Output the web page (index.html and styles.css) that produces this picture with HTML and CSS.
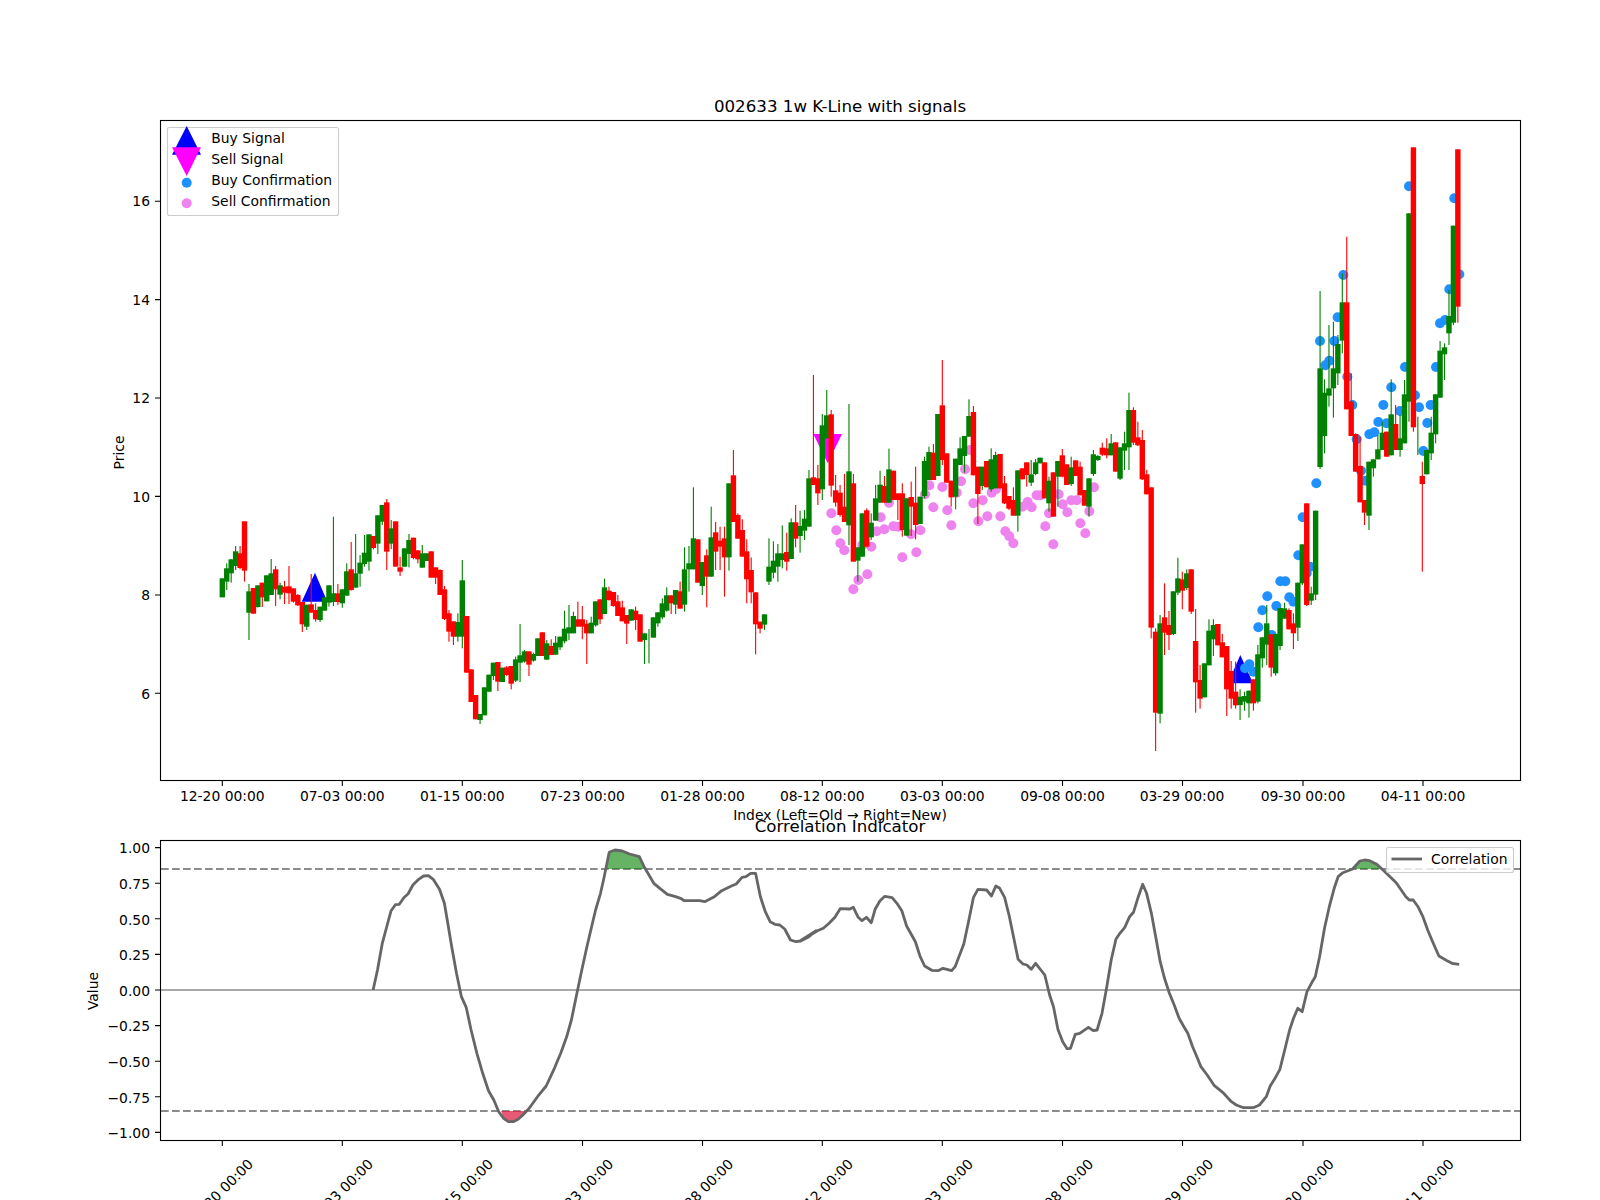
FILE: index.html
```html
<!DOCTYPE html>
<html lang="en">
<head>
<meta charset="utf-8">
<title>002633 1w K-Line with signals</title>
<link rel="stylesheet" href="styles.css">
</head>
<body>
<main class="figure">
<svg class="chart" viewBox="0 0 1600 1200" width="1600" height="1200" xmlns="http://www.w3.org/2000/svg">
  <!-- Price panel -->
  <g id="price-markers"></g>
  <g id="price-candles"></g>
  <rect class="frame" x="160.5" y="120.5" width="1360" height="660"/>
  <path id="price-ticks" class="tick"/>
  <text class="title" x="840" y="112">002633 1w K-Line with signals</text>
  <g class="ylabels">
    <text x="150" y="206">16</text>
    <text x="150" y="304.5">14</text>
    <text x="150" y="403">12</text>
    <text x="150" y="501.5">10</text>
    <text x="150" y="600">8</text>
    <text x="150" y="698.5">6</text>
  </g>
  <text class="axis-name" transform="translate(124 452.5) rotate(-90)">Price</text>
  <g class="xlabels">
    <text x="222.3" y="801">12-20 00:00</text>
    <text x="342.3" y="801">07-03 00:00</text>
    <text x="462.3" y="801">01-15 00:00</text>
    <text x="582.5" y="801">07-23 00:00</text>
    <text x="702.5" y="801">01-28 00:00</text>
    <text x="822.3" y="801">08-12 00:00</text>
    <text x="942.3" y="801">03-03 00:00</text>
    <text x="1062.5" y="801">09-08 00:00</text>
    <text x="1182" y="801">03-29 00:00</text>
    <text x="1303" y="801">09-30 00:00</text>
    <text x="1423" y="801">04-11 00:00</text>
  </g>
  <text class="axis-name" x="840" y="820">Index (Left=Old → Right=New)</text>

  <!-- Price legend -->
  <rect class="legend-box" x="167.5" y="127.5" width="171" height="88" rx="2" ry="2"/>
  <polygon class="buy-signal" points="186.7,126 172,154.7 201,154.7"/>
  <polygon class="sell-signal" points="172,147.3 201,147.3 186.7,176"/>
  <circle class="buy-dot" cx="186.7" cy="182.7" r="5"/>
  <circle class="sell-dot" cx="186.7" cy="203.3" r="5"/>
  <g class="legend-text">
    <text x="211.3" y="143">Buy Signal</text>
    <text x="211.3" y="164">Sell Signal</text>
    <text x="211.3" y="185">Buy Confirmation</text>
    <text x="211.3" y="206">Sell Confirmation</text>
  </g>

  <!-- Correlation panel -->
  <line class="zero-line" x1="161" y1="990" x2="1520" y2="990"/>
  <line class="limit-line" x1="161" y1="869" x2="1520" y2="869"/>
  <line class="limit-line" x1="161" y1="1111" x2="1520" y2="1111"/>
  <g id="corr-fills"></g>
  <polyline id="corr-line" class="corr-line"/>
  <rect class="frame" x="160.5" y="840.5" width="1360" height="300"/>
  <path id="corr-ticks" class="tick"/>
  <text class="title" x="840" y="832">Correlation Indicator</text>
  <g class="ylabels">
    <text x="150" y="853">1.00</text>
    <text x="150" y="888.8">0.75</text>
    <text x="150" y="924.5">0.50</text>
    <text x="150" y="960.2">0.25</text>
    <text x="150" y="995.8">0.00</text>
    <text x="150" y="1031.4">−0.25</text>
    <text x="150" y="1067">−0.50</text>
    <text x="150" y="1102.6">−0.75</text>
    <text x="150" y="1138.2">−1.00</text>
  </g>
  <text class="axis-name" transform="translate(98 991) rotate(-90)">Value</text>
  <g class="xlabels">
    <text transform="translate(224 1195) rotate(-45)">12-20 00:00</text>
    <text transform="translate(344 1195) rotate(-45)">07-03 00:00</text>
    <text transform="translate(464 1195) rotate(-45)">01-15 00:00</text>
    <text transform="translate(584.2 1195) rotate(-45)">07-23 00:00</text>
    <text transform="translate(704.2 1195) rotate(-45)">01-28 00:00</text>
    <text transform="translate(824 1195) rotate(-45)">08-12 00:00</text>
    <text transform="translate(944 1195) rotate(-45)">03-03 00:00</text>
    <text transform="translate(1064.2 1195) rotate(-45)">09-08 00:00</text>
    <text transform="translate(1184.2 1195) rotate(-45)">03-29 00:00</text>
    <text transform="translate(1304.7 1195) rotate(-45)">09-30 00:00</text>
    <text transform="translate(1424.7 1195) rotate(-45)">04-11 00:00</text>
  </g>
  <rect class="legend-box" x="1386.5" y="847.5" width="127" height="25" rx="2" ry="2"/>
  <line class="corr-line" x1="1391.5" y1="859" x2="1422" y2="859"/>
  <text class="legend-label" x="1431" y="864">Correlation</text>
</svg>
</main>
<script src="chart.js"></script>
</body>
</html>
```

FILE: styles.css
```css
html, body {
  margin: 0;
  padding: 0;
  background: #ffffff;
  overflow: hidden;
}
.figure {
  width: 1600px;
  height: 1200px;
}
.chart {
  display: block;
  font-family: "DejaVu Sans", sans-serif;
  font-size: 13.89px;
  fill: #000000;
}
.frame {
  fill: none;
  stroke: #000000;
  stroke-width: 1.1;
}
.tick {
  fill: none;
  stroke: #000000;
  stroke-width: 1.1;
}
.title {
  font-size: 16.67px;
  text-anchor: middle;
}
.axis-name {
  text-anchor: middle;
}
.ylabels text {
  text-anchor: end;
}
.xlabels text {
  text-anchor: middle;
}
.legend-box {
  fill: #ffffff;
  fill-opacity: 0.8;
  stroke: #cccccc;
  stroke-width: 1.1;
}
.buy-signal { fill: #0000ff; }
.sell-signal { fill: #ff00ff; }
.buy-dot { fill: #1e90ff; }
.sell-dot { fill: #ee82ee; }
.candle-up { fill: #008000; }
.candle-down { fill: #ff0000; }
.zero-line {
  stroke: #a9a9a9;
  stroke-width: 2;
}
.limit-line {
  stroke: #8c8c8c;
  stroke-width: 2;
  stroke-dasharray: 7.7 3.3;
}
.corr-line {
  fill: none;
  stroke: #666666;
  stroke-width: 2.8;
  stroke-linejoin: round;
}
.fill-high { fill: #008000; fill-opacity: 0.6; }
.fill-low { fill: #dc143c; fill-opacity: 0.7; }
```

FILE: chart.js
```javascript
(function () {
  var NS = 'http://www.w3.org/2000/svg';
  function el(name, attrs, parent) {
    var n = document.createElementNS(NS, name);
    for (var k in attrs) n.setAttribute(k, attrs[k]);
    parent.appendChild(n);
    return n;
  }

  // Each row: [up?, wickTop, bodyTop, bodyBottom, wickBottom] in crop units (3 per px), offset by crop top.
  var segments = [
    { start: 0, top: 480, rows: [
      [1,295,295,352,352],[1,250,265,305,330],[1,238,238,280,308],[1,198,214,258,270],[0,198,220,264,268],[0,124,124,272,305],
      [1,312,334,398,480],[0,324,324,401,401],[1,316,316,381,383],[0,308,308,352,381],[1,286,286,364,364],[1,237,280,345,345],
      [0,258,268,328,378],[1,308,316,344,358],[0,303,320,338,372],[0,258,319,340,372],[0,325,325,365,368],[0,342,345,376,378],
      [0,366,366,433,456],[1,374,374,440,450],[0,282,373,398,398],[0,370,390,418,425],[1,380,380,420,426],[1,352,352,392,392],
      [1,316,316,368,380],[1,110,340,366,378],[0,312,340,366,375],[1,328,328,370,383],[1,250,274,347,347],[0,186,268,330,332],
      [1,162,280,323,323],[1,225,248,281,320],[1,165,218,252,260],[1,163,163,245,272],[0,168,168,204,208],[1,106,106,191,222],
      [1,75,75,125,135],[0,57,67,215,270],[1,120,145,191,207],[0,124,124,260,260],[0,230,262,275,288],[1,205,205,260,260],
      [1,162,180,222,262],[0,173,173,234,238],[0,211,211,238,250],[1,195,220,263,263],[1,220,220,243,243],[0,214,214,293,293],
      [0,262,262,293,312],[0,268,270,345,345],[0,318,328,417,420],[0,390,400,455,485],[0,424,424,470,495],[1,400,426,470,485],
      [1,240,301,470,505],[0,408,408,578,578],[0,568,568,666,666],[0,645,645,718,718],[1,702,702,720,732],[1,622,622,706,706],
      [1,584,584,635,635],[1,548,548,588,600],[0,546,546,605,633],[1,563,563,606,606],[0,558,562,585,588],[0,558,558,611,628],
      [1,530,538,602,606],[1,432,526,548,606],[1,510,514,545,548],[0,514,514,554,588],[1,518,522,542,545],[1,475,475,528,528],
      [0,457,457,528,528],[1,480,490,539,540],[0,478,498,525,525],[1,468,488,524,524],[1,470,470,502,510],[1,392,446,484,490],
      [1,375,442,460,480],[1,395,408,460,460],[0,365,418,440,440],[0,378,418,440,478],[0,420,431,460,552],[1,410,428,460,460],
      [1,364,364,436,440],[0,358,358,418,432],[1,296,322,402,402],[0,320,332,360,362],[0,336,336,378,380],[0,345,364,408,408],
      [0,362,382,424,424],[0,405,405,431,492],[1,388,388,422,422],[0,380,392,420,450],[0,403,403,485,485],[1,460,460,480,552],
      [1,447,505,505,550]
    ]},
    { start: 97, top: 350, rows: [
      [1,802,802,863,863],[1,787,787,820,830],[1,745,760,802,808],[1,712,736,782,785],[0,736,736,760,792],[1,720,720,764,792],
      [0,695,724,776,776],[1,592,658,764,785],[1,588,640,658,725],[1,412,565,658,658],[0,568,568,698,698],[1,636,636,708,735],
      [0,598,616,680,772],[1,470,562,680,680],[0,516,547,605,660],[0,530,572,590,660],[0,530,565,622,740],[1,400,400,622,662],
      [0,300,376,516,516],[0,490,495,566,566],[0,508,540,620,620],[0,568,604,688,760],[0,622,660,727,760],[0,727,727,823,913],
      [0,815,815,836,850],[1,793,793,824,840],[1,565,650,695,705],[1,574,632,668,685],[1,582,610,650,695],[1,526,610,630,655],
      [0,548,606,635,662],[1,505,517,627,627],[0,465,517,566,592],[1,482,528,558,608],[1,480,506,542,570],[1,360,385,530,530],
      [0,75,382,405,405],[0,345,385,430,465],[1,192,226,418,450],[1,120,196,265,265],[0,180,193,407,440],[0,375,421,458,470],
      [0,405,428,495,500],[0,372,470,516,516],[1,162,364,526,585],[0,372,400,635,635],[1,592,592,632,695],[1,490,490,620,620],
      [0,475,481,590,592],[1,490,518,562,570],[1,405,445,512,512],[1,362,404,458,458],[0,378,408,458,458],[1,296,358,458,458],
      [0,362,362,450,450],[0,430,430,450,510],[0,400,430,540,560],[1,445,445,557,557],[0,395,441,470,558],[0,350,458,525,568],
      [1,440,440,522,522],[1,320,333,438,445],[1,290,306,390,390],[0,282,308,390,390],[1,192,192,378,378],[0,30,166,330,345],
      [0,310,310,398,398],[0,392,392,442,470],[1,326,326,440,478],[1,262,295,345,345],[1,258,258,318,368],[1,148,198,260,260],
      [0,168,186,376,376],[0,350,350,432,522],[1,350,350,408,420],[0,333,333,412,412],[1,295,328,418,425],[1,305,315,415,415],
      [0,312,312,415,415],[0,378,400,460,462],[0,438,438,476,480],[0,412,450,497,497],[1,361,361,497,545],[0,355,355,388,388],
      [0,337,337,375,410],[1,330,373,398,408],[1,327,337,372,376],[1,323,323,340,340],[0,337,337,445,445],[1,380,392,460,485],
      [0,367,367,500,500],[1,333,333,380,470],[0,297,316,380,382],[0,343,343,405,405],[1,320,352,402,408],[0,331,331,378,378],
      [0,335,350,436,436],[0,420,420,467,467],[1,385,385,470,500],[1,300,313,372,378],[1,315,318,330,333],[0,278,293,314,318],
      [0,265,295,316,325],[1,252,280,316,316],[0,277,277,365,365],[1,292,292,386,390],[1,245,280,302,360],[1,128,180,292,360],
      [0,172,180,278,285],[0,215,262,286,288],[0,240,270,388,390]
    ]},
    { start: 208, top: 440, rows: [
      [0,90,103,163,163],[0,142,142,563,595],[0,565,575,818,933],[1,525,550,821,850],[0,430,532,578,645],[0,513,555,585,630],
      [1,454,454,582,585],[1,353,415,458,465],[0,395,418,452,508],[1,388,400,444,450],[0,388,388,515,522],[0,507,603,727,818],
      [0,675,720,776,806],[1,670,670,772,772],[1,538,572,676,676],[1,538,555,598,648],[0,552,552,616,616],[0,582,607,652,652],
      [0,618,618,748,828],[0,663,693,776,806],[0,665,755,796,806],[1,748,770,795,840],[1,755,768,785,812],[1,752,752,790,833],
      [0,718,718,790,812],[1,615,643,785,790],[1,592,592,655,683],[1,495,550,614,675],[0,583,583,683,710],[1,582,582,700,707],
      [1,504,504,618,630],[1,488,505,536,536],[0,505,510,568,568],[0,520,550,580,627],[1,428,428,563,603],[1,313,313,430,435],
      [0,190,190,495,498],[1,440,460,482,495],[1,212,212,464,480]
    ]},
    { start: 247, top: 110, rows: [
      [1,543,775,1071,1077],[1,808,848,978,1030],[1,645,835,857,890],[1,635,775,835,923],[1,675,702,790,825],[1,490,577,692,730],
      [0,380,577,898,898],[0,790,875,978,978],[0,970,972,1085,1085],[0,980,1068,1177,1177],[0,1170,1170,1208,1245],[1,1055,1055,1217,1260],
      [1,1048,1048,1075,1100],[1,975,1018,1048,1048],[1,935,968,1020,1020],[0,965,965,1040,1040],[1,808,913,1036,1036],[0,885,942,1020,1020],
      [1,915,985,1020,1040],[1,810,853,1000,1000],[1,310,310,875,935],[0,112,112,952,965],[1,920,1030,1030,1035],[0,1055,1098,1122,1385],
      [1,1020,1020,1093,1093],[1,920,968,1030,1050],[1,853,853,973,1000],[1,693,722,863,863],[1,700,712,733,810],[1,540,618,670,705],
      [1,347,347,638,645],[0,118,118,590,638]
    ]}
  ];

  var markers = document.getElementById('price-markers');
  var candles = document.getElementById('price-candles');

  function tri(points, cls) { el('polygon', { points: points, 'class': cls }, markers); }
  tri('315,572.7 301.7,601.7 327.3,601.7', 'buy-signal');
  tri('1240.3,655 1228,683.3 1253,683.3', 'buy-signal');
  tri('813.3,434 842,434 827.7,463.3', 'sell-signal');

  // Confirmation dots: [x, y] in 3x crop units relative to the crop origin.
  var sell = [[544,490],[559,541],[571,580],[583,601],[610,718],[625,690],[652,673],[637,585],[664,590],[680,544],[703,538],
    [692,502],[717,458],[730,529],[745,530],[757,622],[783,553],[799,607],[811,541],[825,433],[838,406],[850,472],[877,411],
    [892,481],[904,526],[920,428],[933,394],[945,358],[960,300],[970,460],[985,514],[998,451],[1012,499],[1025,428],[1038,418],
    [1051,499],[1066,544],[1078,559],[1090,580],[1117,470],[1133,456],[1145,472],[1160,436],[1172,436],[1186,529],[1197,490],
    [1210,583],[1226,433],[1238,463],[1252,487],[1264,451],[1280,451],[1291,520],[1306,550],[1318,484],[1332,412]];
  sell.forEach(function (p) {
    el('circle', { cx: 650 + p[0] / 3, cy: 350 + p[1] / 3, r: 5, 'class': 'sell-dot' }, markers);
  });
  var buyA = [[660,693],[676,766],[688,752],[703,693],[713,622],[730,495],[742,800],[757,885],[770,988],[808,973],[823,967],
    [835,936],[850,885],[874,832],[860,940],[900,903],[915,771],[927,229],[945,856],[957,892],[982,939],[992,885],[1008,771],
    [1020,640],[1035,630],[1048,538],[1063,265],[1078,493]];
  buyA.forEach(function (p) {
    el('circle', { cx: 1100 + p[0] / 3, cy: 110 + p[1] / 3, r: 5, 'class': 'buy-dot' }, markers);
  });
  var buyB = [[970,33],[783,92],[795,122],[649,130],[608,232],[595,346],[630,380],[620,400],[541,424],[556,424],[502,469],
    [568,472],[580,485],[529,498],[487,511],[475,562],[515,585],[448,673],[435,685],[460,695]];
  buyB.forEach(function (p) {
    el('circle', { cx: 1100 + p[0] / 3, cy: 440 + p[1] / 3, r: 5, 'class': 'buy-dot' }, markers);
  });

  var STEP = 120 / 27, X0 = 222.3, BODY = 5.4, WICK = 1.1;
  segments.forEach(function (seg) {
    seg.rows.forEach(function (r, k) {
      var x = X0 + STEP * (seg.start + k);
      var cls = r[0] ? 'candle-up' : 'candle-down';
      var y = function (v) { return seg.top + v / 3; };
      el('rect', { x: (x - WICK / 2).toFixed(2), y: y(r[1]).toFixed(2), width: WICK, height: ((r[4] - r[1]) / 3).toFixed(2), 'class': cls }, candles);
      if (r[3] > r[2]) {
        el('rect', { x: (x - BODY / 2).toFixed(2), y: y(r[2]).toFixed(2), width: BODY, height: ((r[3] - r[2]) / 3).toFixed(2), 'class': cls }, candles);
      }
    });
  });

  var ticksX = [222.3, 342.3, 462.3, 582.5, 702.5, 822.3, 942.3, 1062.5, 1182.5, 1303, 1423];
  var d = ticksX.map(function (x) { return 'M' + x + ' 781v5'; }).join('');
  [201.3, 299.6, 398, 496.4, 595, 693.3].forEach(function (y) { d += 'M155 ' + y + 'h5'; });
  document.getElementById('price-ticks').setAttribute('d', d);
  var e = ticksX.map(function (x) { return 'M' + x + ' 1141v5'; }).join('');
  [847.6, 883.2, 918.8, 954.4, 990, 1025.6, 1061.2, 1096.8, 1132.4].forEach(function (y) { e += 'M155 ' + y + 'h5'; });
  document.getElementById('corr-ticks').setAttribute('d', e);

  // Correlation: two crops, y is 3 per px from 800, x is 2.063 per px.
  var left = [[646,570],[655,510],[665,430],[675,375],[683,332],[692,314],[700,313],[710,292],[718,282],[728,255],[740,238],[750,228],
    [760,227],[770,238],[783,268],[793,310],[800,370],[808,440],[818,520],[828,590],[838,622],[848,690],[860,760],[872,820],[884,872],
    [895,900],[905,935],[915,955],[925,965],[935,965],[945,958],[955,945],[968,925],[985,890],[1003,858],[1020,805],[1033,760],[1045,712],
    [1055,660],[1065,590],[1075,520],[1087,440],[1100,360],[1105,330],[1115,280],[1122,235],[1133,157],[1145,150],[1160,153],[1175,162],
    [1195,170],[1205,200],[1225,250],[1240,268],[1253,283],[1270,290],[1280,295],[1288,302],[1320,302],[1330,305],[1340,298],[1350,290],
    [1365,272],[1385,258],[1395,252],[1407,232],[1415,230],[1425,220],[1435,220],[1445,290],[1455,335],[1465,365],[1475,373],[1485,375],
    [1495,387],[1507,420],[1518,425],[1528,423],[1545,410],[1560,392]];
  var right = [[0,423],[18,408],[36,392],[48,385],[60,370],[72,352],[83,326],[103,327],[110,322],[120,352],[128,362],[137,352],[147,368],
    [155,328],[165,302],[175,289],[190,293],[200,310],[210,332],[220,378],[238,425],[248,470],[257,498],[272,511],[285,512],[295,505],
    [313,512],[320,500],[338,432],[347,370],[358,292],[367,268],[385,270],[395,288],[404,258],[412,265],[422,292],[432,350],[450,478],
    [460,492],[468,495],[477,508],[486,490],[505,525],[515,585],[523,620],[532,688],[542,725],[551,746],[558,745],[568,703],[577,700],
    [595,682],[605,692],[613,690],[623,640],[633,560],[642,480],[652,417],[660,400],[670,382],[680,350],[688,337],[698,290],[707,253],
    [715,280],[725,340],[735,420],[743,485],[752,535],[762,580],[772,615],[782,655],[792,680],[800,700],[810,740],[820,775],[827,800],
    [840,825],[855,857],[872,877],[890,905],[900,915],[915,923],[935,923],[948,915],[962,890],[970,858],[980,835],[990,808],[1000,750],
    [1010,690],[1018,655],[1027,625],[1036,635],[1046,575],[1055,550],[1063,530],[1072,470],[1082,385],[1092,320],[1102,265],[1110,230],
    [1120,218],[1140,207],[1155,183],[1165,180],[1175,182],[1190,193],[1205,213],[1230,248],[1250,290],[1257,300],[1265,300],[1275,320],
    [1285,350],[1295,390],[1305,425],[1318,468],[1335,482],[1345,490],[1360,493]];
  function fromLeft(p) { return (60 + p[0] / 2.063).toFixed(1) + ',' + (800 + p[1] / 3).toFixed(1); }
  function fromRight(p) { return (800 + p[0] / 2.063).toFixed(1) + ',' + (800 + p[1] / 3).toFixed(1); }
  document.getElementById('corr-line').setAttribute('points', left.map(fromLeft).concat(right.map(fromRight)).join(' '));

  var fills = document.getElementById('corr-fills');
  el('polygon', { 'class': 'fill-high', points: [[1128,207],[1133,157],[1145,150],[1160,153],[1175,162],[1195,170],[1208,207]].map(fromLeft).join(' ') }, fills);
  el('polygon', { 'class': 'fill-low', points: [[910,933],[915,955],[925,965],[935,965],[945,958],[955,945],[962,933]].map(fromLeft).join(' ') }, fills);
  el('polygon', { 'class': 'fill-high', points: [[1142,207],[1155,183],[1165,180],[1175,182],[1190,193],[1198,207]].map(fromRight).join(' ') }, fills);
})();
```
